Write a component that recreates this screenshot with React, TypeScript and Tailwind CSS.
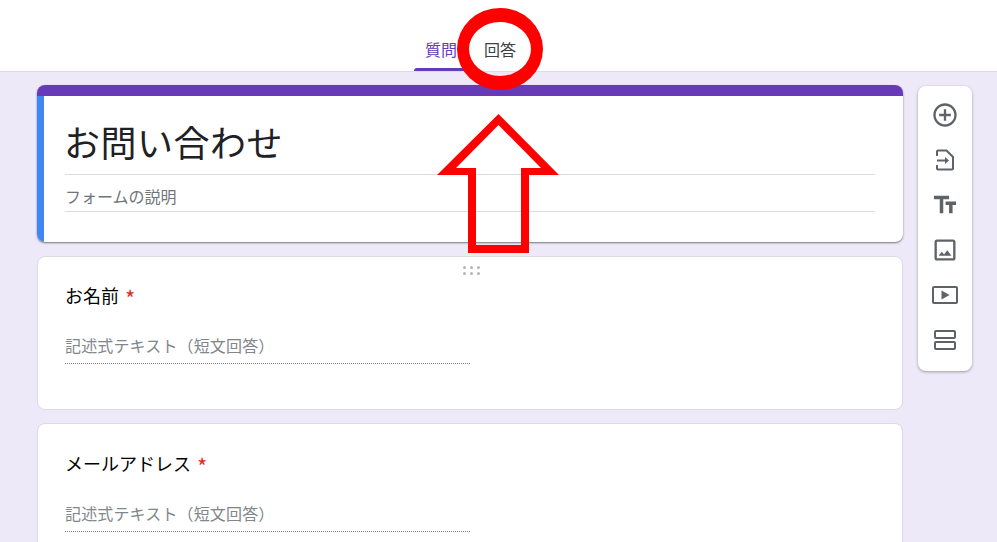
function SideIcon({ children }: { children: React.ReactNode }) {
  return <div className="h-[45px] flex items-center justify-center">{children}</div>;
}

function Sidebar() {
  return (
    <div className="w-[54px] h-[285px] mt-[14px] ml-[15px] pt-[6px] bg-white rounded-lg shadow-[0_1px_3px_rgba(0,0,0,0.35)] flex flex-col">
      <SideIcon>
        <svg viewBox="0 0 24 24" className="w-7 h-7 fill-[#5f6368]">
          <path d="M13 7h-2v4H7v2h4v4h2v-4h4v-2h-4V7zm-1-5C6.48 2 2 6.48 2 12s4.48 10 10 10 10-4.48 10-10S17.52 2 12 2zm0 18c-4.41 0-8-3.59-8-8s3.59-8 8-8 8 3.59 8 8-3.59 8-8 8z" />
        </svg>
      </SideIcon>
      <SideIcon>
        <svg viewBox="0 0 24 24" className="w-6 h-6 fill-none stroke-[#5f6368] stroke-2">
          <path d="M4 8V3.500a1 1 0 0 1 1-1h8.500L20 9v11.500a1 1 0 0 1-1 1H5a1 1 0 0 1-1-1V17" />
          <path d="M4 12.500h9" />
          <path d="M12 9v7l4-3.500z" className="fill-[#5f6368] stroke-0" />
        </svg>
      </SideIcon>
      <SideIcon>
        <svg viewBox="0 0 24 24" className="w-7 h-7 fill-[#5f6368]">
          <path d="M2.500 4v3h5v12h3V7h5V4h-13zm19 5h-9v3h3v7h3v-7h3V9z" />
        </svg>
      </SideIcon>
      <SideIcon>
        <svg viewBox="0 0 24 24" className="w-7 h-7 fill-[#5f6368]">
          <path d="M19 3H5c-1.100 0-2 .9-2 2v14c0 1.100.9 2 2 2h14c1.100 0 2-.9 2-2V5c0-1.100-.9-2-2-2zm0 16H5V5h14v14zm-5.040-6.710l-2.750 3.540-1.960-2.360L6.500 17h11l-3.540-4.710z" />
        </svg>
      </SideIcon>
      <SideIcon>
        <svg viewBox="0 0 26 18" className="w-[26px] h-[18px]">
          <rect x="1" y="1" width="24" height="16" rx="1" className="fill-none stroke-[#5f6368] stroke-2" />
          <path d="M9.500 4.500v9l8-4.500z" className="fill-[#5f6368]" />
        </svg>
      </SideIcon>
      <SideIcon>
        <svg viewBox="0 0 22 20" className="w-[22px] h-5 fill-none stroke-[#5f6368] stroke-2">
          <rect x="1" y="1" width="20" height="7" rx="1" />
          <rect x="1" y="12" width="20" height="7" rx="1" />
        </svg>
      </SideIcon>
    </div>
  );
}

function Question({ label, className }: { label: string; className: string }) {
  return (
    <div className={`relative bg-white rounded-lg border border-[#dadce0] pl-[27px] shrink-0 ${className}`}>
      <div className="h-6 text-[18px] leading-6 text-black">
        {label}
        <span className="ml-[6px] text-[22px] leading-none align-[-4px] text-[#d93025]">*</span>
      </div>
      <div className="mt-[26px] w-[405px] h-[31px] border-b border-dotted border-[#80868b] text-[16px] leading-6 tracking-[0.15px] text-[#80868b]">
        記述式テキスト（短文回答）
      </div>
    </div>
  );
}

export default function App() {
  return (
    <div
      className="relative h-[542px] overflow-hidden bg-[#ede9f8]"
      style={{ fontFamily: '"Noto Sans CJK JP", "Noto Sans", sans-serif' }}
    >
      <header className="h-[72px] bg-white border-b border-[#dadce0] flex pl-[414px]">
        <div className="w-[54px] h-[71px] pt-[37px] flex flex-col justify-between text-center text-[16px] leading-6 text-[#673ab7]">
          <span>質問</span>
          <span className="h-[3px] rounded-t-[3px] bg-[#673ab7]" />
        </div>
        <div className="ml-[16px] pt-[37px] text-[16px] leading-6 text-[#3c4043]">回答</div>
      </header>

      <div className="flex items-start">
        <main className="w-[866px] ml-[37px] mt-[13px] flex flex-col">
          <section className="h-[157px] bg-white rounded-lg overflow-hidden shadow-[0_1px_2px_rgba(0,0,0,0.5)]">
            <div className="h-[11px] bg-[#673ab7]" />
            <div className="h-[146px] border-l-[7px] border-[#4285f4] pl-[21px] pr-[28px]">
              <div className="h-[79px] pt-[19px] border-b border-[#dadce0] text-[36px] leading-[52px] tracking-[0.5px] text-[#202124]">
                <span className="-ml-px">お問い合わせ</span>
              </div>
              <div className="h-[37px] pt-[9px] border-b border-[#dadce0] text-[16px] leading-6 text-[#70757a]">
                フォームの説明
              </div>
            </div>
          </section>

          <Question label="お名前" className="mt-[14px] h-[154px] pt-[26px]" />
          <Question label="メールアドレス" className="mt-[13px] h-[160px] pt-[27px]" />
        </main>
        <Sidebar />
      </div>

      {/* drag handle */}
      <div className="absolute left-[463px] top-[266px] grid grid-cols-3 gap-x-[4px] gap-y-[3px]">
        {[0, 1, 2, 3, 4, 5].map((i) => (
          <span key={i} className="w-[3px] h-[3px] rounded-full bg-[#b5b5b5]" />
        ))}
      </div>

      {/* red annotation marks */}
      <svg className="absolute left-0 top-0 pointer-events-none" width="997" height="542" viewBox="0 0 997 542">
        <path
          fillRule="evenodd"
          fill="#ff0000"
          d="M457 49a43 41 0 1 0 86 0a43 41 0 1 0-86 0zM469 49a31 27 0 1 1 62 0a31 27 0 1 1-62 0z"
        />
        <path
          fillRule="evenodd"
          fill="#ff0000"
          d="M498.500 114L559 175H529V253H468V175H437ZM498.500 125L456 168H476V245H521V168H541Z"
        />
      </svg>
    </div>
  );
}
